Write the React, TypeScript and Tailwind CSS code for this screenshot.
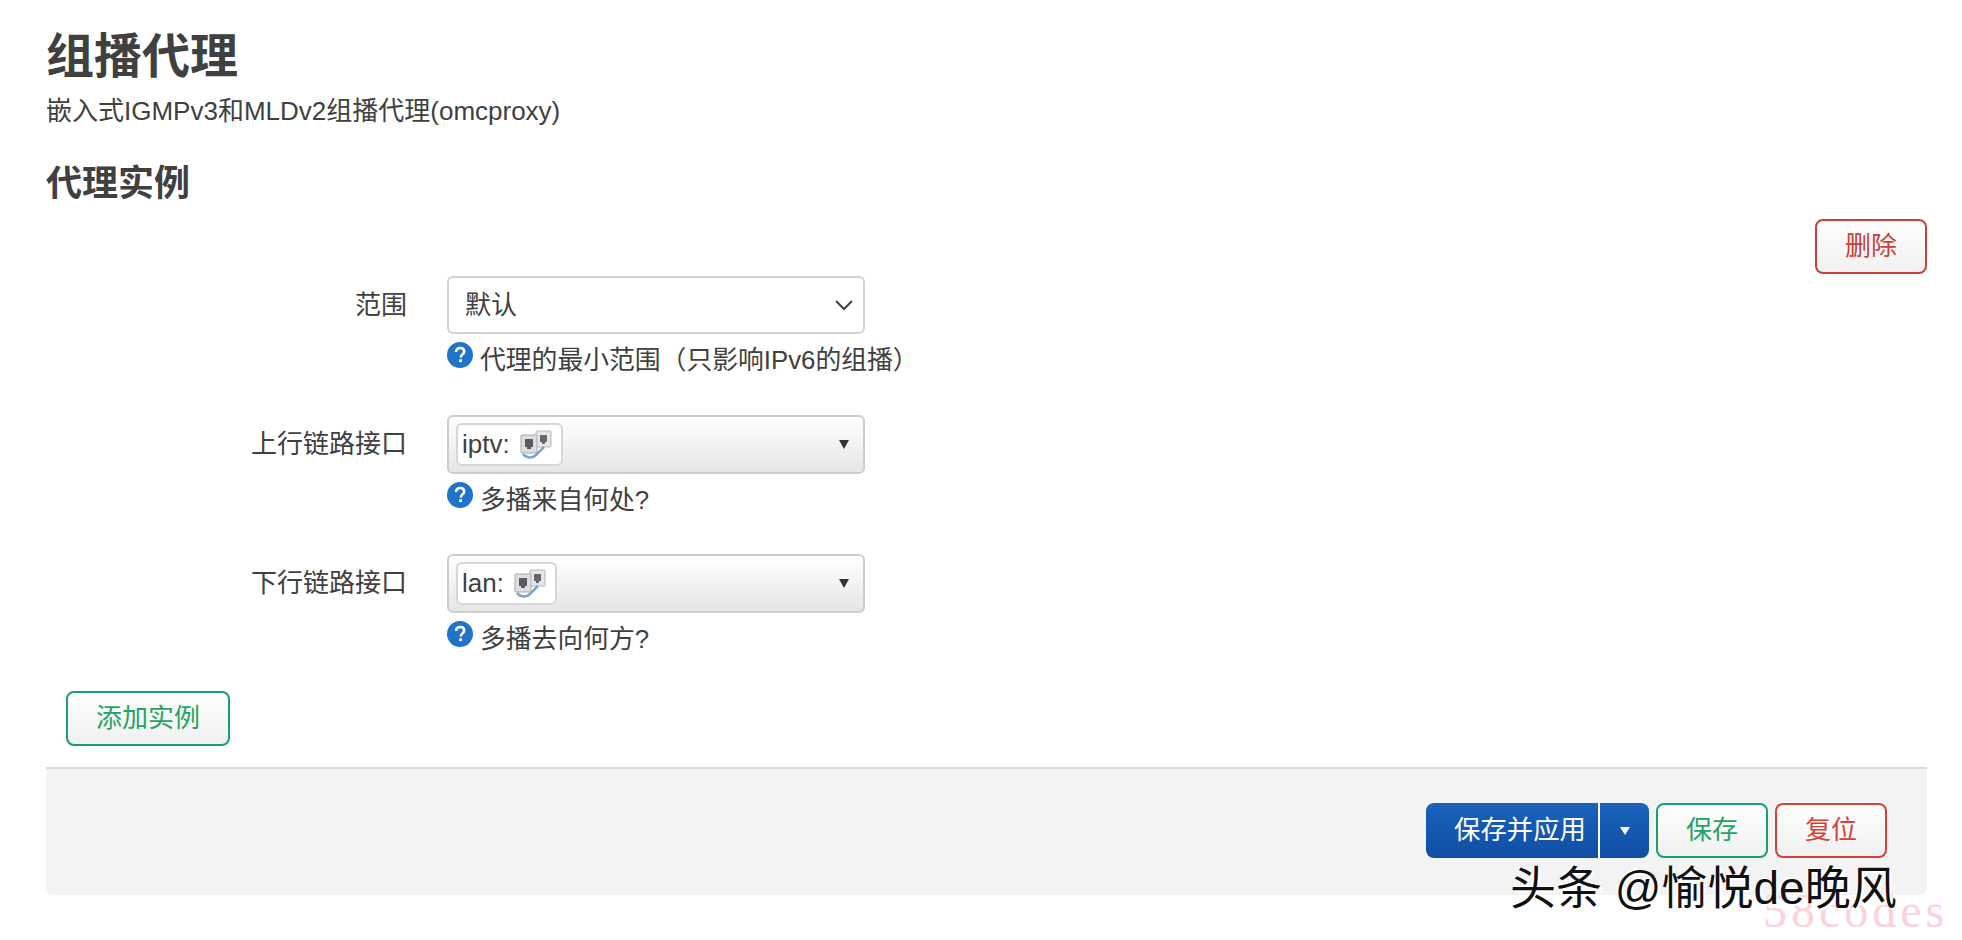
const fontStack = "font-['Liberation_Sans','Noto_Sans_CJK_SC',sans-serif]";

const HelpIcon = () => (
  <svg className="w-[26px] h-[26px] shrink-0" viewBox="0 0 26 26">
    <circle cx="13" cy="13" r="13" fill="#1f74c9" />
    <path d="M9 10c0-2.600 1.800-4 4.200-4 2.400 0 4 1.400 4 3.400 0 3-3.400 3-3.400 6" fill="none" stroke="#fff" strokeWidth="2.600" />
    <rect x="12.200" y="17.300" width="2.800" height="2.800" fill="#fff" />
  </svg>
);

// small bridged-ethernet picture from LuCI
const BridgeIcon = () => (
  <svg className="w-[34px] h-[30px]" viewBox="0 0 34 30">
    <rect x="17" y="1" width="15" height="16" rx="1" fill="#e4e6e8" stroke="#b4b7bb" />
    <path d="M21 5h7v7h-2v2h-3v-2h-2z" fill="#666" />
    <rect x="2" y="5" width="16" height="18" rx="1" fill="#dcdee1" stroke="#a8abb0" />
    <path d="M6 9h8v8h-2v2h-4v-2h-2z" fill="#5a5a5a" />
    <path d="M4 24c3 4 9 5 13 1s5-5 8-8" fill="none" stroke="#7ba3cf" strokeWidth="2.500" />
  </svg>
);

const Chip = ({ label, width }: { label: string; width: string }) => (
  <div className={`flex items-center h-[43px] rounded-md border-2 border-[#d6d6d6] bg-white pl-[4px] gap-[9px] text-[#404040] ${width}`}>
    <span>{label}</span>
    <BridgeIcon />
  </div>
);

const Field = ({ label, help, children }: { label: string; help: string; children: React.ReactNode }) => (
  <div className="flex">
    <div className="w-[401px] h-[58px] flex items-center justify-end pr-[40px] text-[#404040]">{label}</div>
    <div>
      {children}
      <div className="flex items-start gap-[7px] mt-[8px] h-[47px]">
        <HelpIcon />
        <span className="text-[#404040] text-[25.800px] leading-[36px]">{help}</span>
      </div>
    </div>
  </div>
);

const DropSelect = ({ children }: { children: React.ReactNode }) => (
  <div className="w-[418px] h-[59px] flex items-center justify-between pl-[7px] pr-[14px] rounded-md border-2 border-[#cdcdcd] bg-gradient-to-b from-white to-[#e6e6e6]">
    {children}
    <span className="w-0 h-0 border-x-[5px] border-x-transparent border-t-[9px] border-t-[#333]" />
  </div>
);

const OutlineButton = ({ children, color, width }: { children: React.ReactNode; color: string; width: string }) => (
  <button className={`h-[55px] rounded-lg border-2 bg-gradient-to-b from-white to-[#f0f0f0] text-[26px] ${color} ${width}`}>
    {children}
  </button>
);

export default function App() {
  return (
    <div className={`relative w-[1962px] h-[940px] overflow-hidden bg-white text-[26px] ${fontStack}`}>
      <div className="pl-[46px] pr-[35px] pt-[25px]">
        <h1 className="text-[48px] leading-[64px] font-bold text-[#404040]">组播代理</h1>
        <p className="text-[#404040] leading-[36px] mt-[4px]">嵌入式IGMPv3和MLDv2组播代理(omcproxy)</p>
        <h2 className="text-[36px] leading-[50px] font-bold text-[#404040] mt-[30px]">代理实例</h2>

        <div className="flex justify-end mt-[10px]">
          <OutlineButton color="border-[#c9403a] text-[#c9403a]" width="w-[112px]">删除</OutlineButton>
        </div>

        <div className="mt-[2px]">
          <Field label="范围" help="代理的最小范围（只影响IPv6的组播）">
            <div className="w-[418px] h-[58px] flex items-center justify-between pl-[16px] pr-[8px] rounded-md border-2 border-[#d2d2d2] bg-white text-[#404040]">
              <span>默认</span>
              <svg className="w-[22px] h-[22px]" viewBox="0 0 22 22" fill="none" stroke="#404040" strokeWidth="2">
                <path d="M3 7l8 8 8-8" />
              </svg>
            </div>
          </Field>
          <div className="mt-[26px]">
            <Field label="上行链路接口" help="多播来自何处?">
              <DropSelect>
                <Chip label="iptv:" width="w-[107px]" />
              </DropSelect>
            </Field>
          </div>
          <div className="mt-[25px]">
            <Field label="下行链路接口" help="多播去向何方?">
              <DropSelect>
                <Chip label="lan:" width="w-[101px]" />
              </DropSelect>
            </Field>
          </div>
        </div>

        <div className="pl-[20px] mt-[23px]">
          <OutlineButton color="border-[#1a9f6b] text-[#1fa463]" width="w-[164px]">添加实例</OutlineButton>
        </div>

        <div className="mt-[21px] h-[128px] flex justify-end items-start gap-[7px] pt-[34px] pr-[40px] bg-[#f3f3f3] border-t-2 border-[#dcdcdc] rounded-b-md">
          <div className="flex h-[55px] w-[223px] rounded-lg bg-gradient-to-b from-[#1a63bd] to-[#0f4ea3] text-white items-center text-[26.400px]">
            <span className="w-[172px] pl-[28px]">保存并应用</span>
            <span className="w-[2px] h-full bg-white" />
            <span className="flex-1 flex justify-center">
              <span className="w-0 h-0 border-x-[5px] border-x-transparent border-t-[8px] border-t-white" />
            </span>
          </div>
          <OutlineButton color="border-[#1a9f6b] text-[#1fa463]" width="w-[112px]">保存</OutlineButton>
          <OutlineButton color="border-[#d6403a] text-[#d6403a]" width="w-[112px]">复位</OutlineButton>
        </div>
      </div>

      {/* watermarks on top of the screenshot */}
      <div className="absolute left-[1763px] top-[885px] text-[48px] leading-[52px] tracking-[4px] text-[#fbd3da] font-['Liberation_Serif',serif]">58codes</div>
      <div className="absolute left-[1510px] top-[860px] text-[46px] leading-[56px] text-[#111] whitespace-nowrap [text-shadow:2px_2px_0_#fff,-1px_-1px_0_#fff]">头条 @愉悦de晚风</div>
    </div>
  );
}
